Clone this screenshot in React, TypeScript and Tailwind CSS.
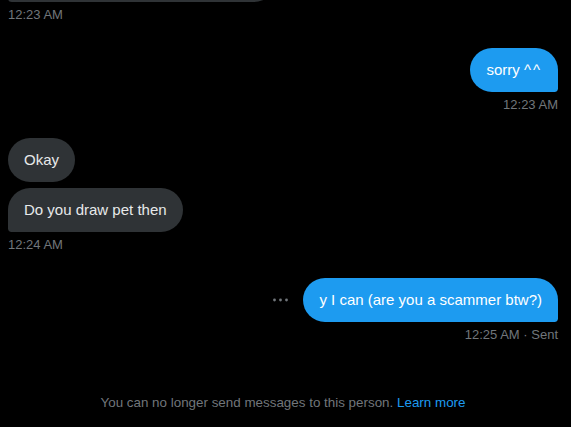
const font = { fontFamily: '"Liberation Sans", Arial, sans-serif' };

function Time({ children, right }: { children: React.ReactNode; right?: boolean }) {
  return (
    <div className={`mt-[5px] text-[13px] leading-4 text-[#71767b] ${right ? "text-right" : ""}`}>
      {children}
    </div>
  );
}

function DotsIcon() {
  return (
    <svg width="18" height="18" viewBox="0 0 18 18" className="text-[#71767b]">
      <circle cx="2.5" cy="9" r="1.4" fill="currentColor" />
      <circle cx="8.5" cy="9" r="1.4" fill="currentColor" />
      <circle cx="14.5" cy="9" r="1.4" fill="currentColor" />
    </svg>
  );
}

export default function App() {
  return (
    <div className="h-[427px] w-[571px] overflow-hidden bg-black pl-2 pr-[13px]" style={font}>
      {/* tail of the previous bubble */}
      <div className="-mt-[42px] flex">
        <div className="h-[44px] w-[268px] rounded-3xl rounded-bl-[4px] bg-[#2f3336]" />
      </div>
      <Time>12:23 AM</Time>

      <div className="mt-[25px] flex flex-col items-end">
        <div className="rounded-3xl rounded-br-[4px] bg-[#1d9bf0] px-4 py-3 text-[15px] leading-5 text-white">
          sorry <span className="tracking-[2px]">^^</span>
        </div>
        <Time right>12:23 AM</Time>
      </div>

      <div className="mt-[25px] flex flex-col items-start gap-[6px]">
        <div className="rounded-3xl bg-[#2f3336] px-4 py-3 text-[15px] leading-5 text-[#e7e9ea]">
          Okay
        </div>
        <div className="rounded-3xl rounded-bl-[4px] bg-[#2f3336] px-4 py-3 text-[15px] leading-5 text-[#e7e9ea]">
          Do you draw pet then
        </div>
      </div>
      <Time>12:24 AM</Time>

      <div className="mt-[25px] flex flex-col items-end">
        <div className="flex items-center gap-[13px]">
          <DotsIcon />
          <div className="rounded-3xl rounded-br-[4px] bg-[#1d9bf0] px-4 py-3 text-[15px] leading-5 text-white">
            y I can (are you a scammer btw?)
          </div>
        </div>
        <Time right>12:25 AM · Sent</Time>
      </div>

      <p className="mt-[50px] text-center text-[13.4px] leading-5 text-[#71767b]">
        You can no longer send messages to this person.{" "}
        <span className="text-[#1d9bf0]">Learn more</span>
      </p>
    </div>
  );
}
